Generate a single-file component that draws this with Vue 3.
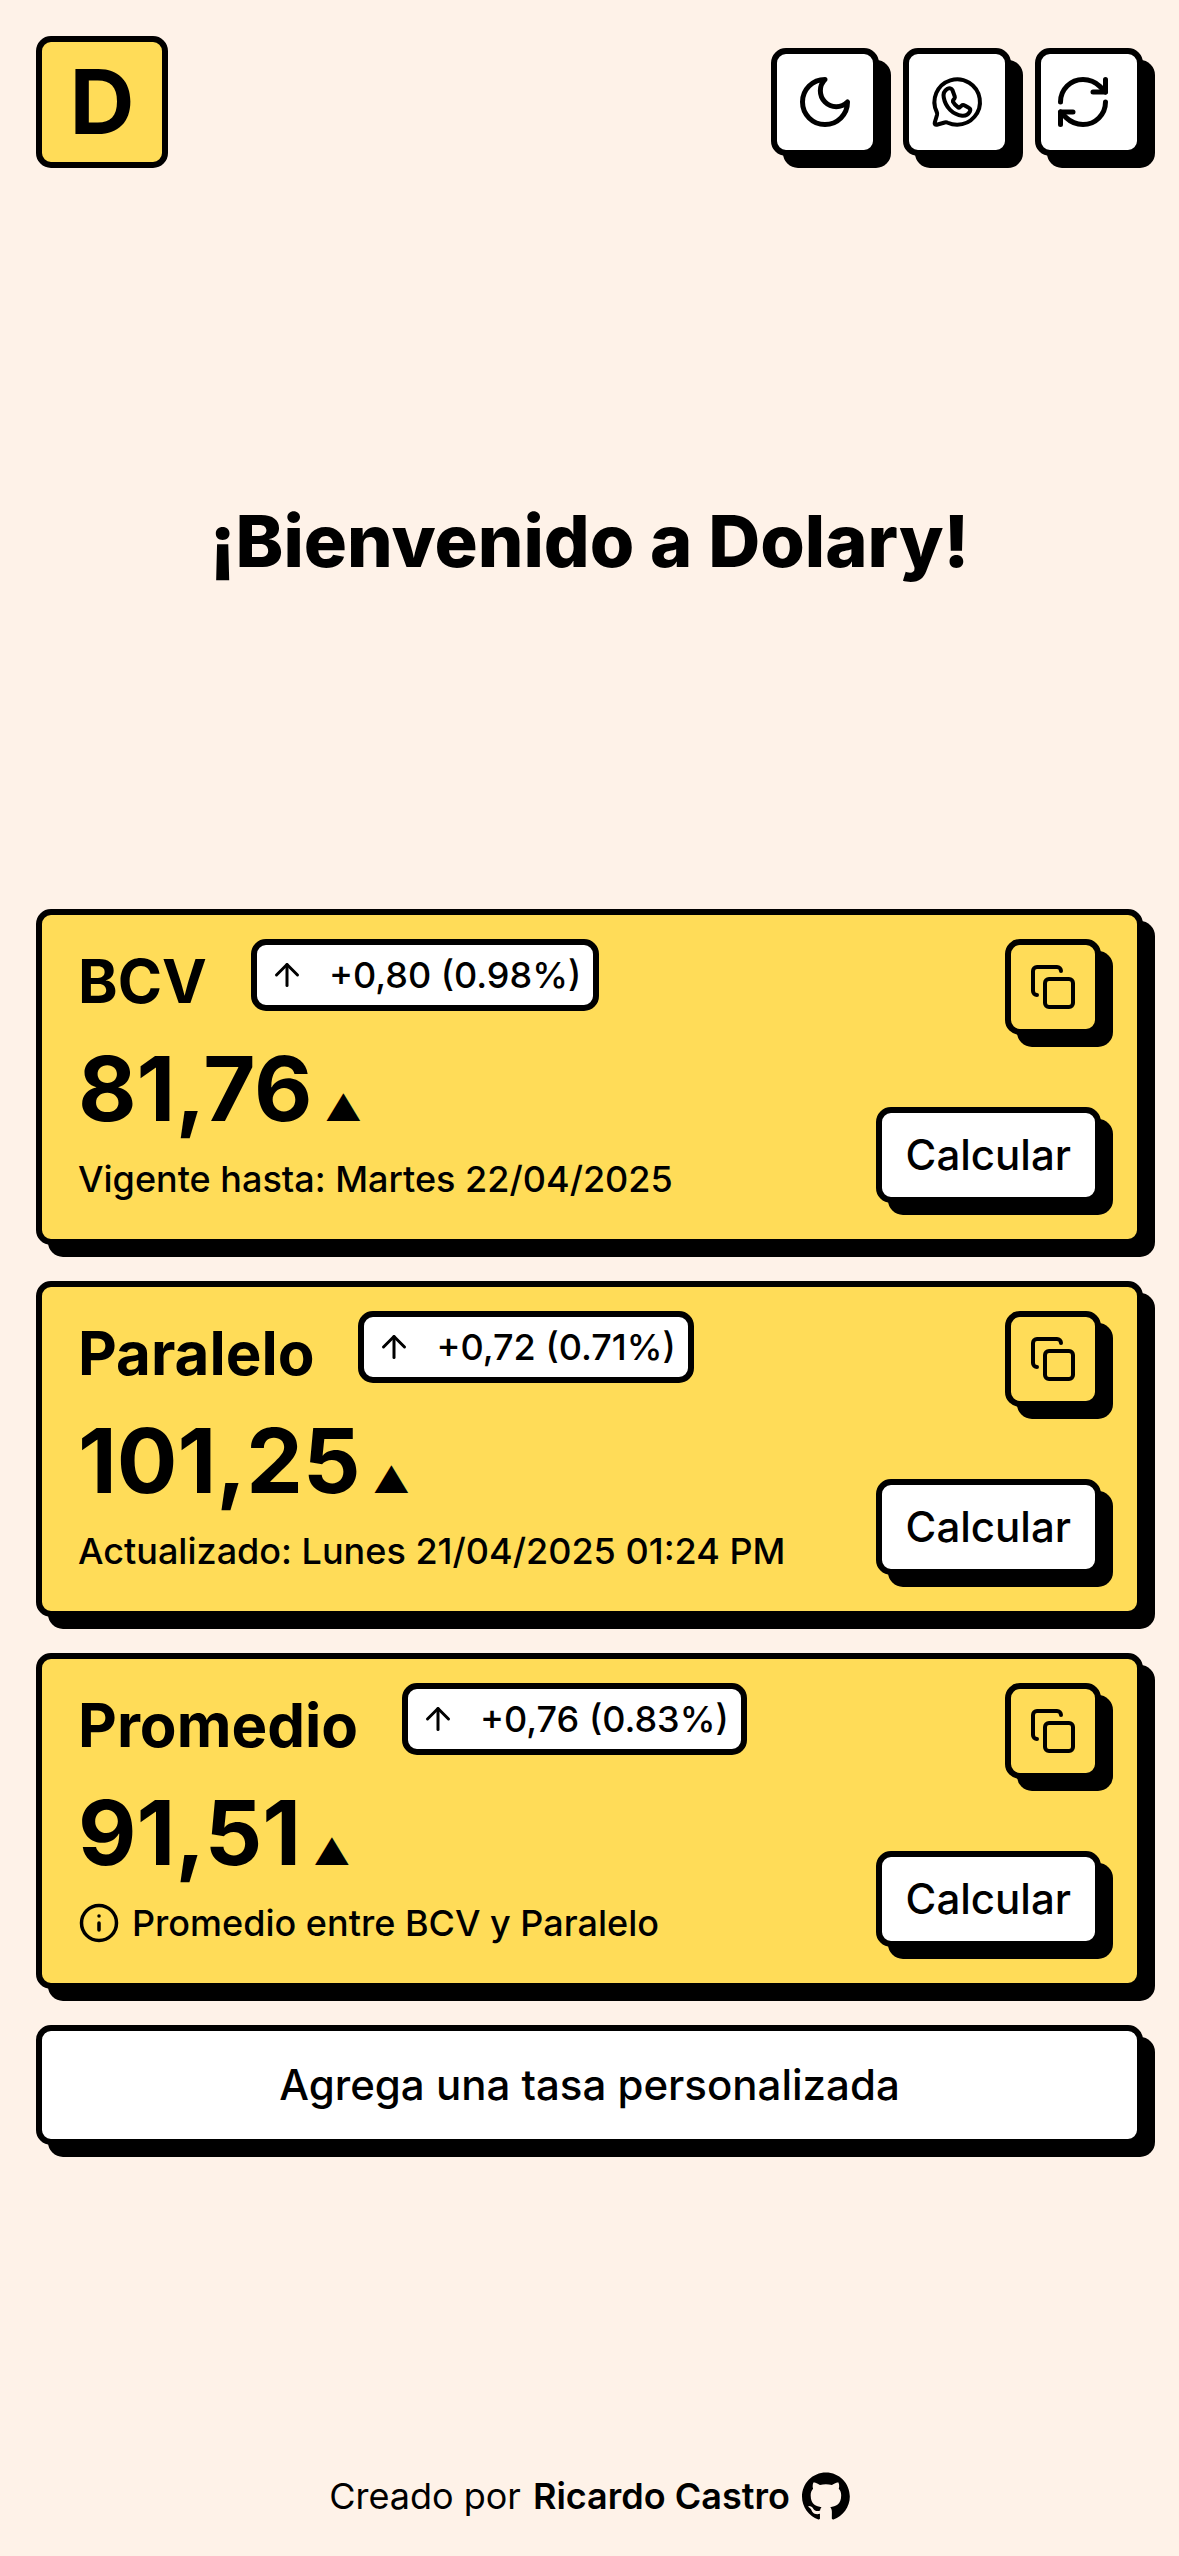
<script setup>
const rates = [
  { name: 'BCV', change: '+0,80 (0.98%)', value: '81,76', note: 'Vigente hasta: Martes 22/04/2025' },
  { name: 'Paralelo', change: '+0,72 (0.71%)', value: '101,25', note: 'Actualizado: Lunes 21/04/2025 01:24 PM' },
  { name: 'Promedio', change: '+0,76 (0.83%)', value: '91,51', note: 'Promedio entre BCV y Paralelo', info: true },
]
</script>

<template>
  <div class="page">
    <header class="header">
      <a class="logo" href="#" aria-label="Dolary">D</a>
      <div class="actions">
        <button class="btn btn-square" type="button" aria-label="Modo oscuro">
          <svg class="icon icon-lg" viewBox="0 0 24 24"><path d="M12 3a6 6 0 0 0 9 9 9 9 0 1 1-9-9Z" /></svg>
        </button>
        <button class="btn btn-square" type="button" aria-label="WhatsApp">
          <svg class="icon icon-lg icon-thin" viewBox="0 0 24 24">
            <path d="M12.1 21.1a9.100 9.100 0 1 0-8.200-5.100c.2.400.2.800.1 1.200l-.900 3c-.2.700.2 1 .8.900l3.200-.9c.4-.1.800-.1 1.200.1a9.100 9.100 0 0 0 3.800.8Z" />
            <path d="M10.200 7.300c-.4-.8-1.200-1-2-.6-1.300.8-1.800 2-1.500 3.500.7 3.900 3.600 6.800 7.400 7.300 1.300.1 2.400-.5 3-1.600.4-.8.2-1.300-.4-1.600l-1.600-.9c-.5-.3-.9-.3-1.300.1l-.7.600c-.2.200-.5.200-.7 0a6 6 0 0 1-2-2.200c-.1-.3 0-.500.100-.700l.500-.600c.2-.300.2-.500.1-.8Z" />
          </svg>
        </button>
        <button class="btn btn-square btn-refresh" type="button" aria-label="Actualizar">
          <svg class="icon icon-lg" viewBox="0 0 24 24">
            <path d="M3 12a9 9 0 0 1 9-9 9.750 9.750 0 0 1 6.740 2.740L21 8" /><path d="M21 3v5h-5" />
            <path d="M21 12a9 9 0 0 1-9 9 9.750 9.750 0 0 1-6.740-2.740L3 16" /><path d="M8 16H3v5" />
          </svg>
        </button>
      </div>
    </header>

    <main class="main">
      <h1 class="welcome">¡Bienvenido a Dolary!</h1>

      <section class="rates">
        <article v-for="rate in rates" :key="rate.name" class="card">
          <div class="details">
            <div class="heading">
              <h2 class="name">{{ rate.name }}</h2>
              <span class="badge">
                <svg class="icon icon-sm" viewBox="0 0 24 24"><path d="m5 12 7-7 7 7" /><path d="M12 19V5" /></svg>
                {{ rate.change }}
              </span>
            </div>
            <p class="value">{{ rate.value }}<span class="trend">▲</span></p>
            <p class="note">
              <svg v-if="rate.info" class="icon icon-info" viewBox="0 0 24 24">
                <circle cx="12" cy="12" r="10" /><path d="M12 16v-4" /><path d="M12 8h.01" />
              </svg>
              {{ rate.note }}
            </p>
          </div>
          <div class="card-actions">
            <button class="btn btn-copy" type="button" aria-label="Copiar">
              <svg class="icon icon-md" viewBox="0 0 24 24">
                <rect x="8" y="8" width="14" height="14" rx="2" />
                <path d="M4 16c-1.100 0-2-.9-2-2V4c0-1.100.9-2 2-2h10c1.100 0 2 .9 2 2" />
              </svg>
            </button>
            <button class="btn btn-calc" type="button">Calcular</button>
          </div>
        </article>
        <button class="btn btn-add" type="button">Agrega una tasa personalizada</button>
      </section>
    </main>

    <footer class="footer">
      <span>Creado por</span>
      <a class="author" href="#">
        Ricardo Castro
        <svg class="github" viewBox="0 0 98 96"><path fill-rule="evenodd" clip-rule="evenodd" d="M48.854 0C21.839 0 0 22 0 49.217c0 21.756 13.993 40.172 33.405 46.690 2.427.490 3.316-1.059 3.316-2.362 0-1.141-.080-5.052-.080-9.127-13.590 2.934-16.420-5.867-16.420-5.867-2.184-5.704-5.420-7.170-5.420-7.170-4.448-3.015.324-3.015.324-3.015 4.934.326 7.523 5.052 7.523 5.052 4.367 7.496 11.404 5.378 14.235 4.074.404-3.178 1.699-5.378 3.074-6.600-10.839-1.141-22.243-5.378-22.243-24.283 0-5.378 1.940-9.778 5.014-13.200-.485-1.222-2.184-6.275.486-13.038 0 0 4.125-1.304 13.426 5.052a46.970 46.970 0 0 1 12.214-1.630c4.125 0 8.330.571 12.213 1.630 9.302-6.356 13.427-5.052 13.427-5.052 2.670 6.763.970 11.816.485 13.038 3.155 3.422 5.015 7.822 5.015 13.200 0 18.905-11.404 23.060-22.324 24.283 1.780 1.548 3.316 4.481 3.316 9.126 0 6.600-.080 11.897-.080 13.526 0 1.304.890 2.853 3.316 2.364 19.412-6.520 33.405-24.935 33.405-46.691C97.707 22 75.788 0 48.854 0z" /></svg>
      </a>
    </footer>
  </div>
</template>

<style>
body {
  margin: 0;
  background: #fef2e8;
}
</style>

<style scoped>
.page {
  box-sizing: border-box;
  min-height: 100vh;
  padding: 36px;
  display: flex;
  flex-direction: column;
  font-family: Inter, "Liberation Sans", sans-serif;
  font-size: 36px;
  font-weight: 500;
  line-height: 48px;
  color: #000;
}
.header {
  display: flex;
  align-items: center;
  justify-content: space-between;
}
.logo {
  box-sizing: border-box;
  width: 132px;
  height: 132px;
  border: 6px solid #000;
  border-radius: 15px;
  background: #ffdc58;
  display: flex;
  align-items: center;
  justify-content: center;
  font-size: 90px;
  font-weight: 700;
  color: inherit;
  text-decoration: none;
}
.actions {
  display: flex;
  gap: 24px;
}
.btn {
  box-sizing: border-box;
  border: 6px solid #000;
  border-radius: 15px;
  box-shadow: 12px 12px 0 #000;
  background: #fff;
  padding: 0;
  display: flex;
  align-items: center;
  justify-content: center;
  font: inherit;
  font-size: 42px;
  color: inherit;
  white-space: nowrap;
}
.btn-square {
  width: 108px;
  height: 108px;
}
.btn-refresh {
  padding-right: 12px;
}
.icon {
  flex: none;
  fill: none;
  stroke: currentColor;
  stroke-width: 2;
  stroke-linecap: round;
  stroke-linejoin: round;
}
.icon-lg {
  width: 60px;
  height: 60px;
}
.icon-md {
  width: 48px;
  height: 48px;
}
.icon-sm {
  width: 36px;
  height: 36px;
}
.icon-info {
  width: 42px;
  height: 42px;
}
.icon-thin {
  stroke-width: 1.6;
}
.main {
  flex: 1;
  display: flex;
  flex-direction: column;
}
.welcome {
  margin: 0;
  padding: 324px 0 320px;
  font-size: 72px;
  font-weight: 800;
  line-height: 97px;
  text-align: center;
}
.rates {
  display: flex;
  flex-direction: column;
  gap: 36px;
}
.card {
  border: 6px solid #000;
  border-radius: 15px;
  box-shadow: 12px 12px 0 #000;
  background: #ffdc58;
  padding: 24px 36px;
  display: flex;
  justify-content: space-between;
}
.details {
  display: flex;
  flex-direction: column;
}
.heading {
  display: flex;
  align-items: flex-start;
  gap: 44px;
  margin-bottom: 12px;
}
.name {
  margin: 0;
  font-size: 60px;
  font-weight: 700;
  line-height: 84px;
}
.badge {
  box-sizing: border-box;
  height: 72px;
  border: 6px solid #000;
  border-radius: 15px;
  background: #fff;
  padding: 0 12px;
  display: flex;
  align-items: center;
  gap: 24px;
  white-space: nowrap;
}
.value {
  margin: 0;
  display: flex;
  align-items: baseline;
  gap: 12px;
  font-size: 90px;
  font-weight: 700;
  line-height: 108px;
}
.trend {
  font-size: 36px;
  line-height: 48px;
}
.note {
  margin: 0;
  display: flex;
  align-items: center;
  gap: 12px;
  line-height: 72px;
}
.card-actions {
  display: flex;
  flex-direction: column;
  align-items: flex-end;
  justify-content: space-between;
  padding-bottom: 12px;
}
.btn-copy {
  width: 96px;
  height: 96px;
  background: #ffdc58;
}
.btn-calc {
  height: 96px;
  padding: 0 24px;
}
.btn-add {
  height: 120px;
}
.footer {
  display: flex;
  align-items: center;
  justify-content: center;
  gap: 12px;
  font-weight: 400;
}
.author {
  display: flex;
  align-items: center;
  gap: 12px;
  font-weight: 600;
  color: inherit;
  text-decoration: none;
}
.github {
  width: 48px;
  height: 48px;
}
</style>
